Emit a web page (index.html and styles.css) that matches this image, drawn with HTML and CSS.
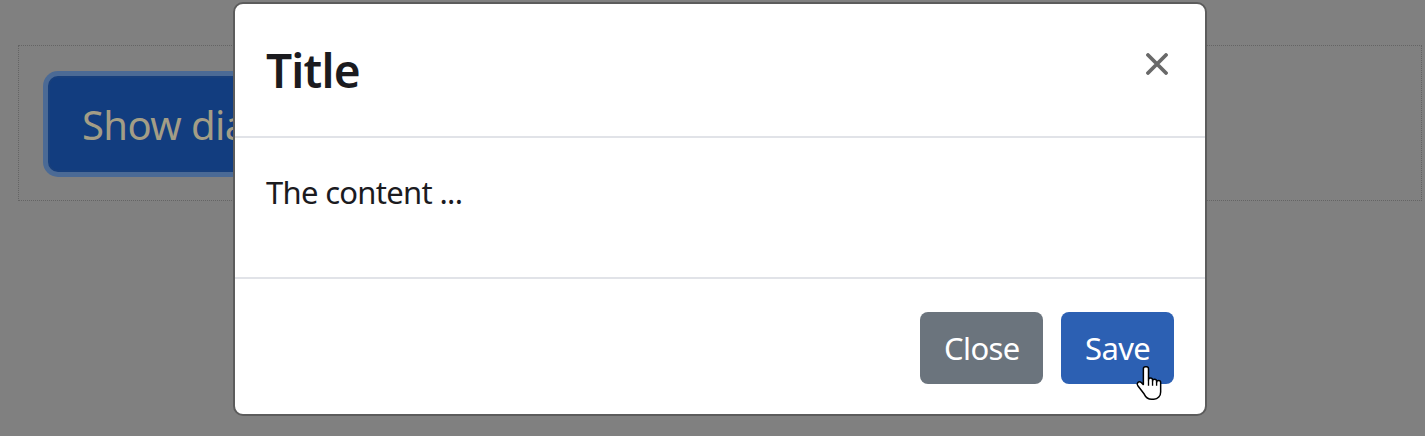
FILE: index.html
```html
<!DOCTYPE html>
<html lang="en">
<head>
    <meta charset="UTF-8">
    <meta name="viewport" content="width=device-width, initial-scale=1.0">
    <title>Modal dialog</title>
    <link rel="stylesheet" href="styles.css">
</head>
<body>
    <div class="page">
        <div class="demo">
            <button class="btn-show">Show dialog</button>
        </div>
    </div>

    <div class="modal">
        <div class="modal-header">
            <h4 class="modal-title">Title</h4>
            <button class="btn-close" aria-label="Close">
                <svg width="22" height="22" viewBox="0 0 22 22">
                    <path d="M2 2 L20 20 M20 2 L2 20" stroke="#696969" stroke-width="3.8" stroke-linecap="round"/>
                </svg>
            </button>
        </div>
        <div class="modal-body">
            <p>The content ...</p>
        </div>
        <div class="modal-footer">
            <button class="btn btn-secondary">Close</button>
            <button class="btn btn-primary">Save</button>
        </div>
    </div>

    <svg class="cursor" width="27" height="36" viewBox="0 0 20 26">
        <path d="M7.7 1 C6.8 1 6.2 1.7 6.2 2.5 V14.2 L4.6 12.6 C3.9 11.9 2.8 11.9 2.1 12.6 C1.5 13.3 1.5 14.3 2.1 15 L6.8 21.2 C7.9 23.6 9.9 25 12.4 25 H14 C17 25 19 22.6 19 19.6 V12.6 C19 11.8 18.4 11.1 17.5 11.1 C16.7 11.1 16 11.8 16 12.6 V11.7 C16 10.9 15.4 10.2 14.5 10.2 C13.7 10.2 13 10.9 13 11.7 V10.8 C13 10 12.4 9.3 11.5 9.3 C10.7 9.3 10 10 10 10.8 V2.5 C10 1.7 9.3 1 8.5 1 Z"
              fill="#fff" stroke="#000" stroke-width="1.1" stroke-linejoin="round"/>
        <path d="M10 10.8 V15 M13 11.7 V15 M16 12.6 V15" stroke="#000" stroke-width="1" fill="none"/>
    </svg>
</body>
</html>
```

FILE: styles.css
```css
body {
    margin: 0;
    background: #808080;
    font-family: "Noto Sans", "Open Sans", sans-serif;
    overflow: hidden;
}

.page {
    padding: 45px 3px 0 18px;
}

.demo {
    height: 156px;
    box-sizing: border-box;
    border: 1px dotted #646464;
    padding: 30px 29px;
}

.btn-show {
    height: 96px;
    padding: 0 32px;
    font-family: inherit;
    font-size: 40px;
    letter-spacing: -0.6px;
    color: #a39d86;
    background: #123d7f;
    border: 2px solid #173f7c;
    border-radius: 10px;
    box-shadow: 0 0 0 5px #4b6a95;
}

.modal {
    position: absolute;
    left: 233px;
    top: 2px;
    width: 974px;
    height: 414px;
    box-sizing: border-box;
    background: #fff;
    border: 2px solid #5c5c5c;
    border-radius: 10px;
    display: flex;
    flex-direction: column;
}

.modal-header {
    display: flex;
    justify-content: space-between;
    align-items: flex-start;
    height: 134px;
    box-sizing: border-box;
    padding: 32px 31px;
    border-bottom: 2px solid #e1e3e8;
}

.modal-title {
    margin: 0;
    font-size: 46px;
    line-height: 69px;
    font-weight: 600;
    letter-spacing: -0.8px;
    color: #1b1b1f;
}

.btn-close {
    width: 48px;
    height: 48px;
    margin: 4px -7px 0 0;
    padding: 0;
    border: none;
    background: none;
    display: flex;
    align-items: center;
    justify-content: center;
}

.modal-body {
    height: 141px;
    box-sizing: border-box;
    padding: 30px 31px;
    border-bottom: 2px solid #e1e3e8;
}

.modal-body p {
    margin: 0;
    font-size: 31px;
    line-height: 48px;
    letter-spacing: -0.7px;
    color: #1b1b1f;
}

.modal-footer {
    flex: 1;
    display: flex;
    justify-content: flex-end;
    align-items: flex-start;
    gap: 18px;
    padding: 33px 31px 0;
}

.btn {
    height: 72px;
    padding: 0 24px;
    font-family: inherit;
    font-size: 31px;
    letter-spacing: -0.6px;
    color: #fff;
    border: none;
    border-radius: 8px;
}

.btn-secondary {
    width: 123px;
    background: #6b747d;
}

.btn-primary {
    width: 113px;
    background: #2c60b3;
}

.cursor {
    position: absolute;
    left: 1135px;
    top: 365px;
}
```
